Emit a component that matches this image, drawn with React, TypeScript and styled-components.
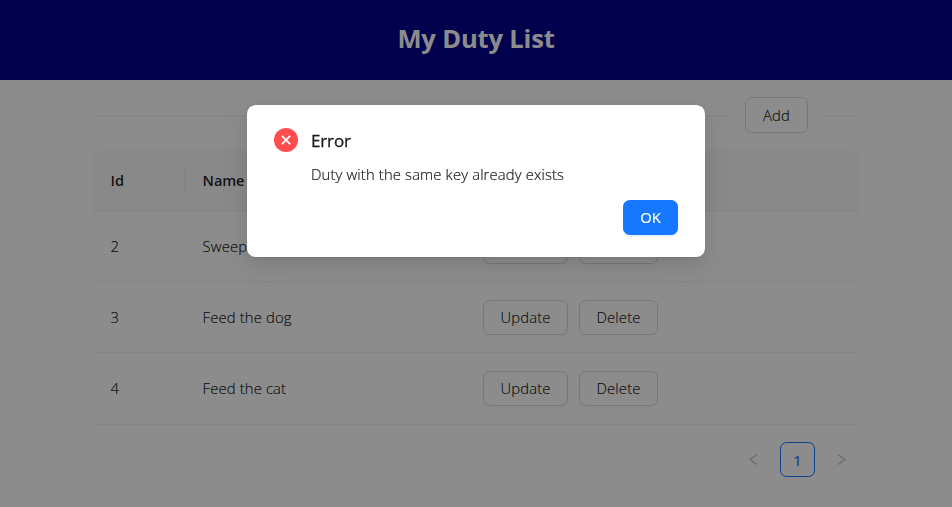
import React from "react";
import styled, { createGlobalStyle, css } from "styled-components";

const GlobalStyle = createGlobalStyle`
  *, *::before, *::after { box-sizing: border-box; }
  html, body { margin: 0; padding: 0; height: 100%; overflow: hidden; }
  body {
    background: #fff;
    color: rgba(0, 0, 0, 0.88);
    font-family: "Segoe UI", "Open Sans", "Noto Sans", sans-serif;
    font-size: 14.8px;
    font-weight: 300;
    letter-spacing: 0.15px;
    line-height: 24px;
    -webkit-text-stroke-width: 0.2px;
  }
  button { font-family: inherit; margin: 0; }
`;

const Header = styled.header`
  height: 80px;
  display: flex;
  align-items: center;
  justify-content: center;
  background: #00008b;
`;

const Title = styled.h1`
  margin: 0;
  padding-bottom: 3px;
  color: #fff;
  font-size: 25.6px;
  font-weight: 700;
  line-height: 36px;
  letter-spacing: -0.2px;
  -webkit-text-stroke-width: 0;
`;

const Content = styled.main`
  width: 766px;
  margin: 0 auto;
  padding-top: 17px;
`;

const Divider = styled.div`
  display: flex;
  align-items: center;
  gap: 17px;
  height: 36px;
`;

const Line = styled.span<{ $width?: number }>`
  height: 2px;
  margin-top: 2px;
  background: rgba(5, 5, 5, 0.035);
  ${({ $width }) => ($width ? css`flex: 0 0 ${$width}px;` : css`flex: 1;`)}
`;

const Button = styled.button<{ $width: number; $tall?: boolean; $primary?: boolean; $raised?: boolean }>`
  width: ${({ $width }) => $width}px;
  height: ${({ $tall }) => ($tall ? 36 : 35)}px;
  padding: 0 0 ${({ $raised }) => ($raised ? 2 : 0)}px;
  border: 1px solid ${({ $primary }) => ($primary ? "#1677ff" : "#d9d9d9")};
  border-radius: 6.6px;
  background: ${({ $primary }) => ($primary ? "#1677ff" : "#fff")};
  color: ${({ $primary }) => ($primary ? "#fff" : "rgba(0, 0, 0, 0.88)")};
  box-shadow: 0 2px 0 ${({ $primary }) => ($primary ? "rgba(5, 145, 255, 0.1)" : "rgba(0, 0, 0, 0.02)")};
  font-size: 14.8px;
  font-weight: ${({ $primary }) => ($primary ? 400 : 300)};
  letter-spacing: ${({ $primary }) => ($primary ? 0 : 0.15)}px;
  line-height: 24px;
  text-align: center;
`;

const Table = styled.div`
  margin-top: 17px;
`;

const Row = styled.div<{ $height: number; $head?: boolean }>`
  display: grid;
  grid-template-columns: 92px 281px 1fr;
  align-items: center;
  height: ${({ $height }) => $height}px;
  border-bottom: 1px solid #f0f0f0;
  ${({ $head }) =>
    $head &&
    css`
      background: #fafafa;
      border-radius: 8.8px 8.8px 0 0;
      font-size: 14.6px;
      font-weight: 600;
      letter-spacing: -0.1px;
      -webkit-text-stroke-width: 0;
    `}
`;

const Cell = styled.div<{ $separated?: boolean }>`
  display: flex;
  align-items: center;
  gap: 11px;
  height: 25px;
  padding-left: 17px;
  border-right: ${({ $separated }) => ($separated ? "1px solid #f0f0f0" : "0")};
`;

const Label = styled.span<{ $raised?: boolean }>`
  padding: 0 0 ${({ $raised }) => ($raised ? 2 : 0)}px 0.6px;
`;

const Pagination = styled.nav`
  display: flex;
  justify-content: flex-end;
  gap: 9px;
  margin-top: 17px;
`;

const PageItem = styled.span<{ $active?: boolean }>`
  display: flex;
  align-items: center;
  justify-content: center;
  width: 35px;
  height: 35px;
  border: 1px solid ${({ $active }) => ($active ? "#1677ff" : "transparent")};
  border-radius: 6.6px;
  color: ${({ $active }) => ($active ? "#1677ff" : "rgba(0, 0, 0, 0.25)")};
  font-weight: 400;
`;

const Mask = styled.div`
  position: fixed;
  inset: 0;
  display: flex;
  align-items: flex-start;
  justify-content: center;
  padding-top: 105px;
  background: rgba(0, 0, 0, 0.45);
`;

const Dialog = styled.section`
  width: 458px;
  height: 152px;
  padding: 22px 27px;
  display: grid;
  grid-template-columns: 24px 1fr;
  grid-template-rows: 27px 8px 24px 1fr;
  column-gap: 13px;
  border-radius: 8.8px;
  background: #fff;
  box-shadow: 0 6.6px 17.6px rgba(0, 0, 0, 0.08), 0 3.3px 6.6px -4.4px rgba(0, 0, 0, 0.12),
    0 9.9px 30.8px 8.8px rgba(0, 0, 0, 0.05);
`;

const ErrorIcon = styled.svg`
  width: 24px;
  height: 24px;
  margin-top: 1px;
`;

const DialogTitle = styled.h2`
  margin: 0;
  font-size: 17px;
  font-weight: 400;
  letter-spacing: -0.15px;
  line-height: 28px;
  -webkit-text-stroke-width: 0.3px;
`;

const Message = styled.p`
  grid-column: 2;
  grid-row: 3;
  margin: 0;
`;

const DialogActions = styled.div`
  grid-column: 1 / -1;
  grid-row: 4;
  display: flex;
  justify-content: flex-end;
  padding-top: 14px;
`;

const Chevron = ({ next }: { next?: boolean }) => (
  <svg width="13" height="13" viewBox="0 0 13 13" fill="none" stroke="currentColor" strokeWidth="1.1">
    <path d={next ? "M3 1.5L10 6.5L3 11.5" : "M10 1.5L3 6.5L10 11.5"} />
  </svg>
);

const duties = [
  { id: 2, name: "Sweep", height: 71, raised: false },
  { id: 3, name: "Feed the dog", height: 71, raised: false },
  { id: 4, name: "Feed the cat", height: 72, raised: true },
];

export default function App() {
  return (
    <>
      <GlobalStyle />
      <Header>
        <Title>My Duty List</Title>
      </Header>
      <Content>
        <Divider>
          <Line />
          <Button $width={63} $tall>Add</Button>
          <Line $width={34} />
        </Divider>
        <Table>
          <Row $height={61} $head>
            <Cell $separated><Label>Id</Label></Cell>
            <Cell $separated><Label>Name</Label></Cell>
            <Cell />
          </Row>
          {duties.map((duty) => (
            <Row key={duty.id} $height={duty.height}>
              <Cell><Label $raised={duty.raised}>{duty.id}</Label></Cell>
              <Cell><Label $raised={duty.raised}>{duty.name}</Label></Cell>
              <Cell>
                <Button $width={85} $raised={duty.raised}>Update</Button>
                <Button $width={79} $raised={duty.raised}>Delete</Button>
              </Cell>
            </Row>
          ))}
        </Table>
        <Pagination>
          <PageItem><Chevron /></PageItem>
          <PageItem $active>1</PageItem>
          <PageItem><Chevron next /></PageItem>
        </Pagination>
      </Content>
      <Mask>
        <Dialog role="alertdialog">
          <ErrorIcon viewBox="0 0 24 24">
            <circle cx="12" cy="12" r="12" fill="#ff4d4f" />
            <path d="M7.9 7.8L16.1 16.2M16.1 7.8L7.9 16.2" stroke="#fff" strokeWidth="1.8" />
          </ErrorIcon>
          <DialogTitle>Error</DialogTitle>
          <Message>Duty with the same key already exists</Message>
          <DialogActions>
            <Button $width={55} $primary $raised>OK</Button>
          </DialogActions>
        </Dialog>
      </Mask>
    </>
  );
}
